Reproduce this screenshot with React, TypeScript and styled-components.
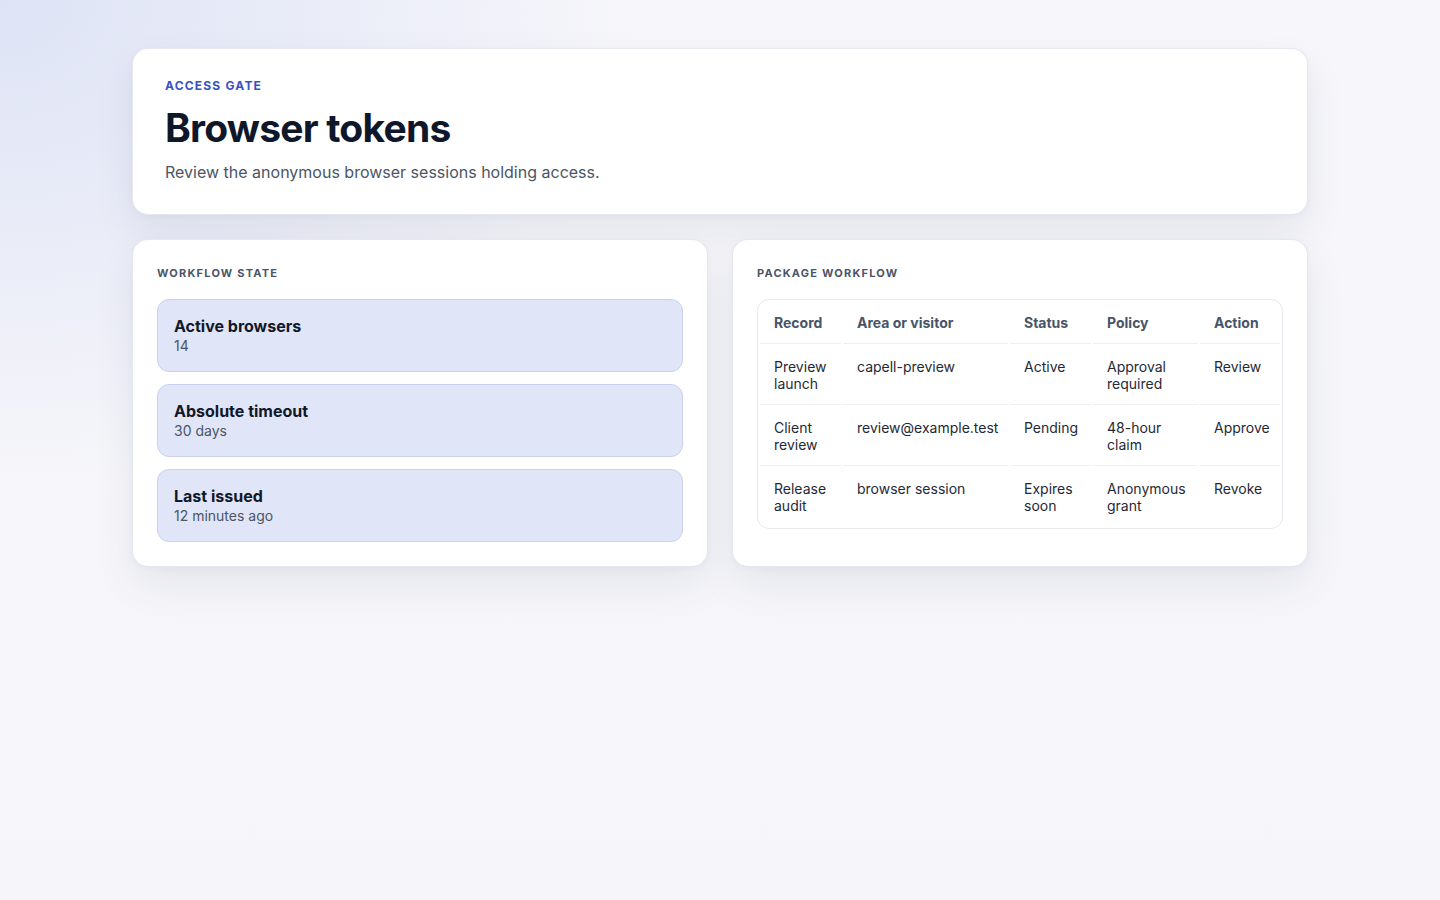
import React from 'react';
import styled, { createGlobalStyle } from 'styled-components';

const GlobalStyle = createGlobalStyle`
  html, body {
    margin: 0;
    padding: 0;
  }
  body {
    font-family: Inter, 'Noto Sans', 'Liberation Sans', sans-serif;
    background: #f6f6fa;
    color: #111827;
  }
`;

const Page = styled.div`
  min-height: 100vh;
  box-sizing: border-box;
  padding: 48px 0;
  background:
    radial-gradient(ellipse 900px 700px at 0% 0%, rgba(219, 225, 245, 0.9), rgba(219, 225, 245, 0) 70%),
    linear-gradient(180deg, #f6f6fb 0%, #f6f6fa 100%);
`;

const Shell = styled.main`
  width: 1176px;
  margin: 0 auto;
  display: flex;
  flex-direction: column;
  gap: 24px;
`;

const Card = styled.section`
  background: #ffffff;
  border: 1px solid rgba(226, 230, 240, 0.9);
  border-radius: 16px;
  box-shadow: 0 18px 40px rgba(30, 41, 80, 0.08), 0 2px 6px rgba(30, 41, 80, 0.03);
  padding: 24px;
  box-sizing: border-box;
  min-width: 0;
`;

const HeroCard = styled(Card)`
  padding: 29px 32px 30px;
`;

const Eyebrow = styled.div`
  font-size: 12px;
  line-height: 16px;
  font-weight: 700;
  letter-spacing: 0.1em;
  text-transform: uppercase;
  color: #3552c4;
  margin-bottom: 12px;
`;

const Title = styled.h1`
  margin: 0;
  font-size: 39px;
  line-height: 44px;
  font-weight: 700;
  letter-spacing: -0.02em;
  color: #0f172a;
`;

const Subtitle = styled.p`
  margin: 10px 0 0;
  font-size: 16px;
  line-height: 24px;
  color: #4b5565;
`;

const Grid = styled.div`
  display: grid;
  grid-template-columns: minmax(0, 1fr) minmax(0, 1fr);
  gap: 24px;
  align-items: stretch;
`;

const SectionLabel = styled.h2`
  margin: 0 0 16px;
  font-size: 11px;
  line-height: 19px;
  font-weight: 700;
  letter-spacing: 0.11em;
  text-transform: uppercase;
  color: #4b5568;
`;

const StatList = styled.div`
  display: flex;
  flex-direction: column;
  gap: 12px;
`;

const StatItem = styled.div`
  background: #e0e5f8;
  border: 1px solid #c9d1ef;
  border-radius: 12px;
  padding: 16px;
  display: flex;
  flex-direction: column;
`;

const StatLabel = styled.div`
  font-size: 16px;
  line-height: 21px;
  font-weight: 700;
  color: #111827;
`;

const StatValue = styled.div`
  font-size: 14px;
  line-height: 18px;
  color: #4b5565;
`;

const TableWrap = styled.div`
  border: 1px solid #e6e8ee;
  border-radius: 12px;
  overflow: hidden;
`;

const Table = styled.table`
  width: 100%;
  table-layout: fixed;
  border-collapse: separate;
  border-spacing: 2px;
  font-size: 14px;
  line-height: 17px;
`;

const Col = styled.col<{ w?: number }>`
  width: ${p => (p.w ? `${p.w}px` : 'auto')};
`;

const Th = styled.th`
  text-align: left;
  font-weight: 700;
  color: #475569;
  padding: 12px 14px;
  border-bottom: 1px solid #eceef2;
`;

const Td = styled.td<{ last?: boolean }>`
  text-align: left;
  vertical-align: top;
  color: #1f2937;
  padding: 12px 14px;
  border-bottom: ${p => (p.last ? 'none' : '1px solid #eceef2')};
`;

const stats = [
  { label: 'Active browsers', value: '14' },
  { label: 'Absolute timeout', value: '30 days' },
  { label: 'Last issued', value: '12 minutes ago' },
];

const rows = [
  ['Preview launch', 'capell-preview', 'Active', 'Approval required', 'Review'],
  ['Client review', 'review@example.test', 'Pending', '48-hour claim', 'Approve'],
  ['Release audit', 'browser session', 'Expires soon', 'Anonymous grant', 'Revoke'],
];

const headers = ['Record', 'Area or visitor', 'Status', 'Policy', 'Action'];
const colWidths = [81, 165, 81, 105, 0];

export default function App() {
  return (
    <>
      <GlobalStyle />
      <Page>
        <Shell>
          <HeroCard>
            <Eyebrow>Access gate</Eyebrow>
            <Title>Browser tokens</Title>
            <Subtitle>Review the anonymous browser sessions holding access.</Subtitle>
          </HeroCard>

          <Grid>
            <Card>
              <SectionLabel>Workflow state</SectionLabel>
              <StatList>
                {stats.map(s => (
                  <StatItem key={s.label}>
                    <StatLabel>{s.label}</StatLabel>
                    <StatValue>{s.value}</StatValue>
                  </StatItem>
                ))}
              </StatList>
            </Card>

            <Card>
              <SectionLabel>Package workflow</SectionLabel>
              <TableWrap>
                <Table>
                  <colgroup>
                    {colWidths.map((w, i) => (
                      <Col key={i} w={w || undefined} />
                    ))}
                  </colgroup>
                  <thead>
                    <tr>
                      {headers.map(h => (
                        <Th key={h}>{h}</Th>
                      ))}
                    </tr>
                  </thead>
                  <tbody>
                    {rows.map((r, i) => (
                      <tr key={r[0]}>
                        {r.map(c => (
                          <Td key={c} last={i === rows.length - 1}>
                            {c}
                          </Td>
                        ))}
                      </tr>
                    ))}
                  </tbody>
                </Table>
              </TableWrap>
            </Card>
          </Grid>
        </Shell>
      </Page>
    </>
  );
}
